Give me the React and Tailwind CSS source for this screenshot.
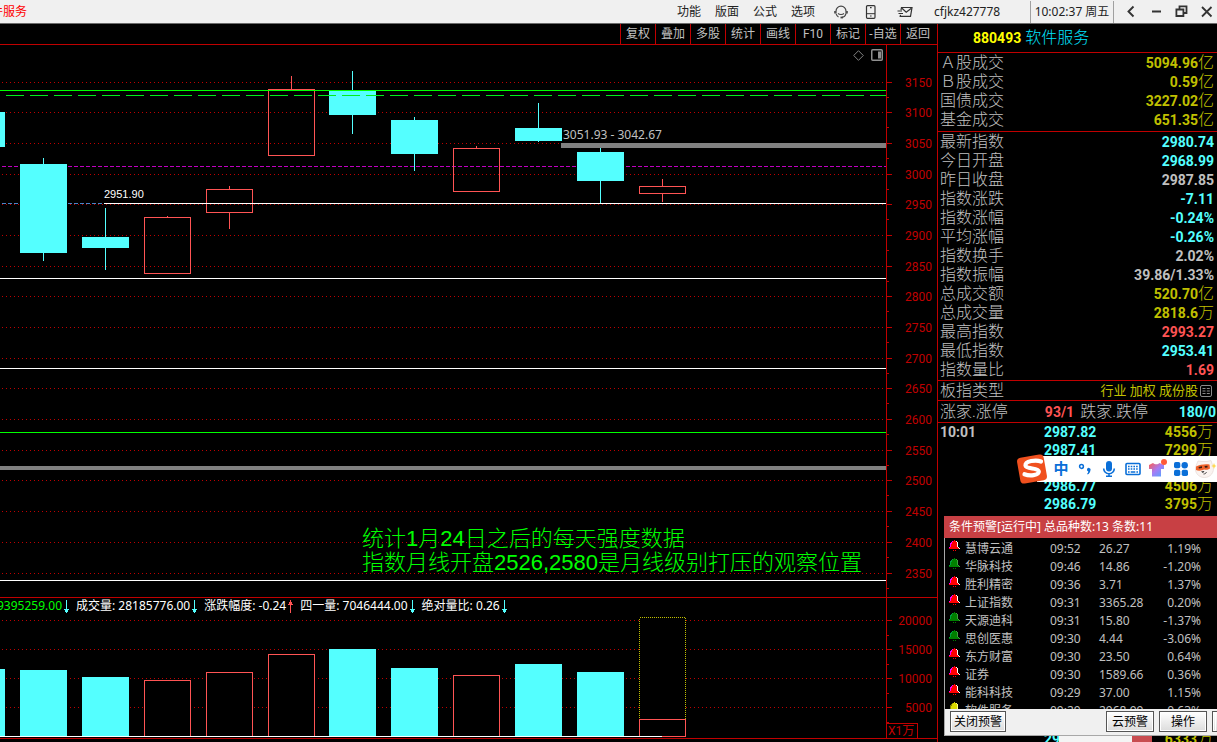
const TOP_MENU = ["功能", "版面", "公式", "选项"];
const TOOLBAR = ["复权", "叠加", "多股", "统计", "画线", "F10", "标记", "-自选", "返回"];

const PRICE_LABELS = [
  3150, 3100, 3050, 3000, 2950, 2900, 2850, 2800, 2750, 2700, 2650, 2600, 2550, 2500, 2450, 2400, 2350,
];
const priceY = (i) => Math.floor(37 + 30.6875 * i);

const VOLUME_LABELS = [20000, 15000, 10000, 5000];
const volumeY = (i) => 6 + 29 * i;

const BODY = 47;

// x, body top, body bottom, wick top, wick bottom, rising, volume top
const CANDLES = [
  [-42, 67, 102, 67, 102, false, 55],
  [20, 119, 208, 113, 216, false, 56],
  [82, 192, 203, 163, 225, false, 63],
  [144, 172, 229, 171, 229, true, 66],
  [206, 144, 168, 141, 184, true, 58],
  [268, 44, 111, 31, 111, true, 40],
  [329, 46, 70, 26, 89, false, 35],
  [391, 75, 109, 72, 126, false, 54],
  [453, 103, 147, 101, 147, true, 61],
  [515, 83, 96, 58, 97, false, 50],
  [577, 107, 136, 103, 158, false, 58],
  [639, 141, 149, 134, 157, true, 105],
];

const INDICATORS = [
  { label: "", value: "9395259.00", up: false, color: "text-[#00ff00]" },
  { label: "成交量: ", value: "28185776.00", up: false, color: "text-white" },
  { label: "涨跌幅度: ", value: "-0.24", up: true, color: "text-white" },
  { label: "四一量: ", value: "7046444.00", up: false, color: "text-white" },
  { label: "绝对量比: ", value: "0.26", up: false, color: "text-white" },
];

const CYAN = "text-[#54ffff]";
const RED = "text-[#ff5454]";
const OLIVE = "text-[#c0c000]";
const GRAY = "text-[#c0c0c0]";

const TURNOVER = [
  ["Ａ股成交", "5094.96", "亿", OLIVE],
  ["Ｂ股成交", "0.59", "亿", OLIVE],
  ["国债成交", "3227.02", "亿", OLIVE],
  ["基金成交", "651.35", "亿", OLIVE],
];

const QUOTES = [
  ["最新指数", "2980.74", "", CYAN],
  ["今日开盘", "2968.99", "", CYAN],
  ["昨日收盘", "2987.85", "", GRAY],
  ["指数涨跌", "-7.11", "", CYAN],
  ["指数涨幅", "-0.24%", "", CYAN],
  ["平均涨幅", "-0.26%", "", CYAN],
  ["指数换手", "2.02%", "", GRAY],
  ["指数振幅", "39.86/1.33%", "", GRAY],
  ["总成交额", "520.70", "亿", OLIVE],
  ["总成交量", "2818.6", "万", OLIVE],
  ["最高指数", "2993.27", "", RED],
  ["最低指数", "2953.41", "", CYAN],
  ["指数量比", "1.69", "", RED],
];

const TICKS = [
  ["10:01", "2987.82", "4556"],
  ["", "2987.41", "7299"],
  null,
  ["", "2986.77", "4506"],
  ["", "2986.79", "3795"],
];

const ALERTS = [
  ["red", "慧博云通", "09:52", "26.27", "1.19%"],
  ["green", "华脉科技", "09:46", "14.86", "-1.20%"],
  ["red", "胜利精密", "09:36", "3.71", "1.37%"],
  ["red", "上证指数", "09:31", "3365.28", "0.20%"],
  ["green", "天源迪科", "09:31", "15.80", "-1.37%"],
  ["green", "思创医惠", "09:30", "4.44", "-3.06%"],
  ["red", "东方财富", "09:30", "23.50", "0.64%"],
  ["red", "证券", "09:30", "1589.66", "0.36%"],
  ["red", "能科科技", "09:29", "37.00", "1.15%"],
  ["yellow", "软件服务", "09:29", "2968.99", "-0.63%"],
];

function TitleBar() {
  return (
    <header className="flex h-6 shrink-0 items-center justify-between overflow-hidden border-b border-[#6b6b6b] bg-[#f0f0f0] text-xs text-[#222] font-['Noto_Sans','Noto_Sans_CJK_SC',sans-serif]">
      <div className="-ml-[9px] text-[#ff0000]">件服务</div>
      <div className="flex h-full items-center">
        <nav className="flex gap-[14px]">
          {TOP_MENU.map((m) => (
            <button key={m} className="whitespace-nowrap">{m}</button>
          ))}
        </nav>
        <button aria-label="客服" className="ml-[19px]">
          <svg className="h-[14px] w-[14px]" viewBox="0 0 14 14" fill="none" stroke="#444">
            <path d="M2 8.200V6.200a5 5 0 0 1 10 0v2.500" strokeWidth="1.2" />
            <path d="M1 6v2.500M13 6v2.500" strokeWidth="1.6" />
            <path d="M4 8.500c1.500 1.300 4.500 1.300 6 0" strokeWidth="1.1" />
            <path d="M12 8.700c-.6 2.300-2 3.500-4 3.700M2 8.700c.5 1.700 1.300 2.600 2.500 3.200" strokeWidth="1.1" />
            <path d="M6.500 12.500h2.500" strokeWidth="1.8" />
          </svg>
        </button>
        <button aria-label="手机" className="ml-[16px]">
          <svg className="h-[14px] w-[14px]" viewBox="0 0 14 14" fill="none" stroke="#333">
            <rect x="2.500" y=".7" width="8.500" height="12.600" rx="1" strokeWidth="1.2" />
            <path d="M2.500 8.700h8.500" />
            <path d="M6 11h1.600M6 2.700h1.600" strokeWidth="1.2" />
          </svg>
        </button>
        <button aria-label="邮件" className="ml-[19px]">
          <svg className="h-[14px] w-[16px]" viewBox="0 0 16 14" fill="none" stroke="#333" strokeWidth="1.2">
            <path d="M4 5.200L4.500 2.500H15l-1.500 8.800H3.200l.3-1.500" />
            <path d="M5 3.200l4.200 4 5.200-4" />
            <path d="M.5 6h4.500M1.500 8.500h4.500" />
          </svg>
        </button>
        <span className="ml-[21px] w-[96px]">cfjkz427778</span>
        <span className="flex h-[22px] w-[84px] items-center justify-center whitespace-nowrap border-x border-[#a0a0a0]">
          10:02:37 周五
        </span>
        <div className="flex items-center gap-[10px] pl-[10px] pr-[3px]">
          <button aria-label="后退">
            <svg className="h-[15px] w-[15px]" viewBox="0 0 15 15" fill="none" stroke="#333" strokeWidth="1.9">
              <path d="M9.500 2.500l-5 5 5 5" />
            </svg>
          </button>
          <button aria-label="最小化">
            <svg className="h-[15px] w-[15px]" viewBox="0 0 15 15" stroke="#333" strokeWidth="2">
              <path d="M3 7.500h9" />
            </svg>
          </button>
          <button aria-label="还原">
            <svg className="h-[15px] w-[15px]" viewBox="0 0 15 15" fill="none" stroke="#333" strokeWidth="1.8">
              <path d="M2.400 5.500h7v6.500h-7zM5.500 5V2.400h7v6.600H10" />
            </svg>
          </button>
          <button aria-label="关闭">
            <svg className="h-[15px] w-[15px]" viewBox="0 0 15 15" stroke="#333" strokeWidth="1.8">
              <path d="M3 3l9.500 9.500M12.500 3L3 12.500" />
            </svg>
          </button>
        </div>
      </div>
    </header>
  );
}

function Grid({ ys }) {
  return ys.map((y) => (
    <line key={y} x1="2" x2="100%" y1={y + 0.5} y2={y + 0.5} stroke="#c00000" strokeDasharray="1 3" />
  ));
}

function Axis({ labels, y, minor, className, children }) {
  return (
    <svg
      className={`w-[51px] shrink-0 border-l border-[#c00000] text-xs font-['Roboto','Noto_Sans_CJK_SC',sans-serif] ${className}`}
      shapeRendering="crispEdges"
    >
      {labels.map((label, i) => (
        <g key={label}>
          <path d={`M0 ${y(i) + 0.5}h5M0 ${y(i) + minor + 0.5}h2`} stroke="#c00000" />
          <text x="45" y={y(i) + 5} textAnchor="end" fill="#c00000">{label}</text>
        </g>
      ))}
      {children}
    </svg>
  );
}

function PriceChart() {
  return (
    <svg className="block h-[552px] w-full" shapeRendering="crispEdges">
      <Grid ys={PRICE_LABELS.map((_, i) => priceY(i))} />
      <line x1="2" x2="100%" y1="121.500" y2="121.500" stroke="#c000c0" strokeDasharray="4 2" />
      <line x1="2" x2="104" y1="158.500" y2="158.500" stroke="#4a84c8" strokeDasharray="4 2" />
      {CANDLES.map(([x, top, bottom, high, low, up]) => {
        const color = up ? "#ff5454" : "#54ffff";
        const mid = x + 23.5;
        return (
          <g key={x} stroke={color}>
            <path d={`M${mid} ${high}V${top}M${mid} ${bottom}V${low}`} />
            <rect
              x={x + 0.5}
              y={top + 0.5}
              width={BODY - 1}
              height={bottom - top - 1}
              fill={up ? "none" : color}
            />
          </g>
        );
      })}
      <line x1="0" x2="100%" y1="45.500" y2="45.500" stroke="#00ff00" />
      <line x1="6" x2="100%" y1="50.500" y2="50.500" stroke="#00ee1c" strokeDasharray="18 6" />
      <line x1="104" x2="100%" y1="158.500" y2="158.500" stroke="#fff" />
      <line x1="0" x2="100%" y1="233.500" y2="233.500" stroke="#fff" />
      <line x1="0" x2="100%" y1="323.500" y2="323.500" stroke="#fff" />
      <line x1="0" x2="100%" y1="387.500" y2="387.500" stroke="#00ff00" />
      <line x1="0" x2="100%" y1="423" y2="423" stroke="#808080" strokeWidth="4" />
      <line x1="0" x2="100%" y1="535.500" y2="535.500" stroke="#fff" />
      <line x1="561" x2="100%" y1="100.500" y2="100.500" stroke="#808080" strokeWidth="5" />
      <text x="563" y="94" fill="#c0c0c0" className="text-xs font-['Noto_Sans',sans-serif]">3051.93 - 3042.67</text>
      <text x="104" y="153" fill="#fff" className="text-[11px] font-['Liberation_Sans',sans-serif]">2951.90</text>
      <g fill="#00ff00" className="text-[22px] font-light font-['Liberation_Sans','Noto_Sans_CJK_SC',sans-serif]">
        <text x="362" y="501">统计1月24日之后的每天强度数据</text>
        <text x="362" y="525">指数月线开盘2526,2580是月线级别打压的观察位置</text>
      </g>
    </svg>
  );
}

function VolumeChart() {
  return (
    <svg className="block h-[124px] w-full" shapeRendering="crispEdges">
      <Grid ys={VOLUME_LABELS.map((_, i) => volumeY(i))} />
      <rect x="639.500" y="3.500" width="46" height="119" fill="#000" stroke="#c0c000" strokeDasharray="1 1" />
      {CANDLES.map(([x, , , , , up, top]) => (
        <rect
          key={x}
          x={x + 0.5}
          y={top + 0.5}
          width={BODY - 1}
          height={122 - top}
          fill={up ? "#000" : "#54ffff"}
          stroke={up ? "#ff5454" : "#54ffff"}
        />
      ))}
      <line x1="0" x2="662" y1="122.500" y2="122.500" stroke="#fff" />
    </svg>
  );
}

function Arrow({ up }) {
  return (
    <svg className="mx-[2px] h-[13px] w-[5px]" viewBox="0 0 5 13" shapeRendering="crispEdges">
      {up ? (
        <path d="M2 0h1v2h1v2h1v1H3v8H2V5H0V4h1V2h1z" fill="#ff5454" />
      ) : (
        <path d="M2 0h1v9h2v1H4v2H3v1H2v-1H1v-2H0V9h2z" fill="#54ffff" />
      )}
    </svg>
  );
}

function ChartPanel() {
  return (
    <main className="min-w-0 flex-1">
      <div className="flex h-[21px] justify-end border-b border-[#c00000] pr-[2px] text-xs text-[#c0c0c0]">
        {TOOLBAR.map((t) => (
          <button key={t} className="w-[35px] whitespace-nowrap border-l border-[#c00000] font-['Roboto','Noto_Sans_CJK_SC',sans-serif]">
            {t}
          </button>
        ))}
      </div>
      <div className="flex border-b border-[#c00000]">
        <div className="relative min-w-0 flex-1">
          <PriceChart />
          <div className="absolute right-[3px] top-1 flex items-center gap-[7px]">
            <button aria-label="标记">
              <svg className="h-[11px] w-[11px]" viewBox="0 0 11 11" fill="none" stroke="#808080">
                <path d="M5.500.7l4.800 4.800-4.800 4.800L.7 5.500z" />
              </svg>
            </button>
            <button aria-label="侧栏">
              <svg className="h-[12px] w-[12px]" viewBox="0 0 12 12">
                <rect x=".75" y=".75" width="10.500" height="10.500" rx="1" fill="none" stroke="#909090" strokeWidth="1.500" />
                <path d="M7 2.500h3v7H7z" fill="#909090" />
              </svg>
            </button>
          </div>
        </div>
        <Axis labels={PRICE_LABELS} y={priceY} minor={15} className="h-[552px]" />
      </div>
      <div className="flex border-b border-[#c00000]">
        <div className="min-w-0 flex-1">
          <div className="-ml-[3px] flex h-4 items-center gap-[5px] whitespace-pre text-xs font-['Noto_Sans','Noto_Sans_CJK_SC',sans-serif]">
            {INDICATORS.map((ind) => (
              <span key={ind.value} className={`flex items-center ${ind.color}`}>
                {ind.label}
                {ind.value}
                <Arrow up={ind.up} />
              </span>
            ))}
          </div>
          <VolumeChart />
        </div>
        <Axis labels={VOLUME_LABELS} y={(i) => volumeY(i) + 16} minor={15} className="h-[140px]">
          <path d="M0 125.500h30.500V140" fill="none" stroke="#c00000" />
          <text x="1" y="137" fill="#c00000">X1万</text>
        </Axis>
      </div>
    </main>
  );
}

function Unit({ children }) {
  return <span className="text-base leading-3 font-light">{children}</span>;
}

function QuoteTable({ rows }) {
  return (
    <table className="w-full">
      <tbody>
        {rows.map(([label, value, unit, color]) => (
          <tr key={label} className="h-[19px]">
            <th className="p-0 text-left text-base leading-[19px] font-light">{label}</th>
            <td className={`p-0 text-right text-sm leading-[18px] font-bold ${color}`}>
              {value}
              {unit && <Unit>{unit}</Unit>}
            </td>
          </tr>
        ))}
      </tbody>
    </table>
  );
}

function Bell({ color }) {
  const fill = { red: "#ff0000", green: "#008000", yellow: "#d8d800" }[color];
  const left = { red: "#ff00ff", green: "#00a040", yellow: "#808000" }[color];
  const right = { red: "#ffffff", green: "#40a040", yellow: "#ffff80" }[color];
  return (
    <svg className="block h-[12px] w-[11px]" viewBox="0 0 11 12" shapeRendering="crispEdges">
      <path d="M5 0h1v1h2v2h1v4h1v1h1v1H0V8h1V7h1V3h1V1h2z" fill={fill} />
      <path d="M3 1h1v1H3v2H2v3H1v1H0V7h1V3h1V2h1z" fill={left} />
      <path d="M7 1h1v1h1v5h1v1h1v1h-1V8H9V7H8V2H7z" fill={right} />
      <path d="M4 10h1v1H4zM6 10h1v1H6z" fill={fill} />
    </svg>
  );
}

function AlertWindow() {
  const button =
    "h-[21px] whitespace-nowrap border border-[#555] bg-linear-to-b from-white to-[#dcdcdc] text-black outline outline-1 -outline-offset-2 outline-white";
  return (
    <section className="mt-[3px] ml-[6px] text-xs text-[#c0c0c0] font-['Noto_Sans','Noto_Sans_CJK_SC',sans-serif]">
      <h2 className="h-[22px] overflow-hidden whitespace-nowrap bg-[#c84044] pl-[5px] leading-[22px] text-white">
        条件预警[运行中] 总品种数:13 条数:11
      </h2>
      <div className="border-l border-b border-[#a8a8a8]">
        <div className="h-[171px] overflow-hidden pt-[2px] pl-1">
          <table className="w-full table-fixed">
            <tbody>
              {ALERTS.map(([color, name, time, price, pct]) => (
                <tr key={name} className="h-[18px] leading-[18px]">
                  <td className="w-[16px] p-0 align-top"><Bell color={color} /></td>
                  <td className="w-[85px] p-0">{name}</td>
                  <td className="w-[49px] p-0">{time}</td>
                  <td className="p-0">{price}</td>
                  <td className="w-[60px] p-0 pr-4 text-right">{pct}</td>
                </tr>
              ))}
            </tbody>
          </table>
        </div>
        <div className="flex h-[26px] items-start overflow-hidden bg-[#f0f0f0] pt-[2px] pl-[5px]">
          <button className={`${button} w-[56px]`}>关闭预警</button>
          <button className={`${button} ml-auto w-[48px]`}>云预警</button>
          <button className={`${button} ml-[5px] w-[48px]`}>操作</button>
          <button aria-label="更多" className={`${button} ml-[5px] w-[5px] border-r-0`} />
        </div>
      </div>
    </section>
  );
}

function ImeBar() {
  return (
    <div className="absolute right-0 top-[430px] flex h-[30px] w-[201px] items-center text-[#0a6fd8]">
      <div className="absolute right-0 h-[26px] w-[180px] bg-white" />
      <div className="relative flex items-center">
        <svg className="h-[30px] w-[32px]" viewBox="0 0 32 30">
          <rect x="2.500" y="2" width="27" height="26" rx="4" fill="#f0501e" transform="rotate(-10 16 15)" />
          <path
            d="M25 7.500C20 5.500 9 7 9.500 11.500c.5 4 13 2 13.300 6 .3 4-9.300 4.800-14.300 2.700"
            fill="none"
            stroke="#fff"
            strokeWidth="4.200"
            strokeLinecap="round"
          />
        </svg>
        <div className="flex items-center pl-px">
          <button className="w-6 text-center text-[15px] leading-4 font-bold">中</button>
          <button aria-label="标点" className="flex w-6 justify-center">
            <svg className="h-4 w-4" viewBox="0 0 16 16">
              <circle cx="4.500" cy="5.500" r="1.900" fill="none" stroke="currentColor" strokeWidth="1.500" />
              <path d="M10 8.500a1.800 1.800 0 1 1 3.400 1c-.3 1.800-1 3-2.700 4l-.6-.8c.8-.8 1.200-1.500 1.200-2.300A1.700 1.700 0 0 1 10 8.500z" fill="currentColor" />
            </svg>
          </button>
          <button aria-label="语音" className="flex w-6 justify-center">
            <svg className="h-4 w-4" viewBox="0 0 16 16">
              <rect x="5" y="0" width="6" height="10.500" rx="3" fill="currentColor" />
              <path d="M2.700 7.500a5.300 5.300 0 0 0 10.600 0M8 12.500V15M5 15.200h6" fill="none" stroke="currentColor" strokeWidth="1.600" />
            </svg>
          </button>
          <button aria-label="键盘" className="flex w-6 justify-center">
            <svg className="h-4 w-4" viewBox="0 0 16 16">
              <rect x="1" y="2.500" width="14" height="11" rx="1" fill="none" stroke="currentColor" strokeWidth="1.600" />
              <path d="M3 5.500h10M3 8h10" stroke="currentColor" strokeWidth="1.500" strokeDasharray="1.600 1.100" />
              <path d="M3 11h1.600M5.700 11h4.600M11.400 11H13" stroke="currentColor" strokeWidth="1.300" />
            </svg>
          </button>
          <button aria-label="皮肤" className="flex w-6 justify-center">
            <svg className="h-5 w-5" viewBox="0 0 20 20">
              <defs>
                <linearGradient id="skin" x1="0" y1="0" x2="1" y2="1">
                  <stop offset="0" stopColor="#ff5a4a" />
                  <stop offset=".5" stopColor="#a67cf5" />
                  <stop offset="1" stopColor="#4aa8ff" />
                </linearGradient>
              </defs>
              <path d="M6 4c1.500 1.800 5 1.800 6.500 0L17 6v4h-3v7.500H5V10H2V6z" fill="url(#skin)" />
              <circle cx="17" cy="3" r="3" fill="#ff5a36" />
            </svg>
          </button>
          <button aria-label="工具箱" className="flex w-6 justify-center">
            <svg className="h-[14px] w-[14px]" viewBox="0 0 14 14" fill="currentColor">
              <rect x="0" y="0" width="6.300" height="6.300" rx="1.800" />
              <circle cx="10.700" cy="3.200" r="3.200" />
              <rect x="0" y="7.700" width="6.300" height="6.300" rx="1.800" />
              <rect x="7.700" y="7.700" width="6.300" height="6.300" rx="1.800" />
            </svg>
          </button>
          <button aria-label="头像" className="flex w-6 justify-center">
            <svg className="h-5 w-6" viewBox="0 0 24 20">
              <path d="M3 7l2-5 4 .5h5l4-1 2 6a9 8.500 0 1 1-17-.5z" fill="#faf3f0" stroke="#e8dcd8" strokeWidth=".8" />
              <path d="M3 7.500c4-2 9-2.500 13.500-2l.5 4c-2 1.500-4 1.500-6 1-2 1.300-6 1.500-8 .5z" fill="#f0622a" />
              <path d="M5.500 8l3.500-.8v1.800l-3 .5zM11.500 7l3-.3v1.700l-2.500.4z" fill="#3a1c10" />
              <path d="M8 12.500l3.500-.5-1.500 2z" fill="#222" />
              <path d="M10.500 15c1.500 0 2.500-.7 3-2" fill="none" stroke="#222" strokeWidth=".8" />
              <path d="M21 4l.8 2.200 1.700.8-1.700.8-.8 2.200-.8-2.200-2-.8 2-.8z" fill="#ffd84a" />
            </svg>
          </button>
        </div>
      </div>
    </div>
  );
}

function Sidebar() {
  const row = "border-b border-[#c00000] pl-[2px]";
  return (
    <aside className="relative w-[280px] shrink-0 overflow-hidden border-l border-[#c00000] text-[#c0c0c0] font-['Roboto','Noto_Sans_CJK_SC',sans-serif]">
      <h1 className="flex h-[29px] items-center gap-1 border-b border-[#c00000] pl-[35px]">
        <span className="text-sm font-bold text-[#ffff00]">880493</span>
        <span className="text-base leading-5 font-light text-[#00e4ff]">软件服务</span>
      </h1>
      <div className={`${row} pr-[3px] pb-[2px]`}>
        <QuoteTable rows={TURNOVER} />
      </div>
      <div className={`${row} pr-[3px] pb-px`}>
        <QuoteTable rows={QUOTES} />
      </div>
      <div className={`${row} flex h-5 items-center justify-between pr-[5px]`}>
        <span className="text-base leading-[19px] font-light">板指类型</span>
        <span className="flex items-center gap-[2px] text-[13px] leading-[19px] text-[#c0c000]">
          行业 加权 成份股
          <svg className="h-[12px] w-[12px]" viewBox="0 0 12 12" fill="none" stroke="#8a8a8a">
            <rect x=".5" y=".5" width="11" height="11" rx="1.500" />
            <path d="M2.500 3.500h3M2.500 6h3M2.500 8.500h3M6.800 3.500h3M6.800 6h3M6.800 8.500h3" />
          </svg>
        </span>
      </div>
      <div className={`${row} flex h-[22px] items-center pr-px text-sm font-bold`}>
        <span className="text-base leading-5 font-light">涨家.涨停</span>
        <span className="ml-auto text-[#ff5454]">93/1</span>
        <span className="ml-[6px] text-base leading-5 font-light">跌家.跌停</span>
        <span className="w-[68px] text-right text-[#54ffff]">180/0</span>
      </div>
      <table className="w-full text-sm font-bold">
        <tbody>
          {TICKS.map((tick, i) => (
            <tr key={i} className="h-[18px]">
              {tick && (
                <>
                  <td className="w-[106px] p-0 pl-[2px] leading-[18px]">{tick[0]}</td>
                  <td className="p-0 leading-[18px] text-[#54ffff]">{tick[1]}</td>
                  <td className="p-0 pr-[4px] text-right leading-[18px] text-[#c0c000]">
                    {tick[2]}
                    <Unit>万</Unit>
                  </td>
                </>
              )}
            </tr>
          ))}
        </tbody>
      </table>
      <AlertWindow />
      <div className="flex h-[6px] items-center overflow-hidden pl-[106px] pr-[4px] text-sm leading-[18px] font-bold">
        <span className="w-[15px] overflow-hidden text-[#54ffff]">29</span>
        <span className="flex h-[6px] w-[93px] justify-end bg-[#f4f4f4]">
          <span className="h-[6px] w-5 bg-[#c84c50]" />
        </span>
        <span className="ml-auto text-[#c0c000]">
          6333<Unit>万</Unit>
        </span>
      </div>
      <ImeBar />
    </aside>
  );
}

export default function App() {
  return (
    <div className="flex h-screen flex-col overflow-hidden bg-black">
      <TitleBar />
      <div className="flex min-h-0 flex-1">
        <ChartPanel />
        <Sidebar />
      </div>
    </div>
  );
}
